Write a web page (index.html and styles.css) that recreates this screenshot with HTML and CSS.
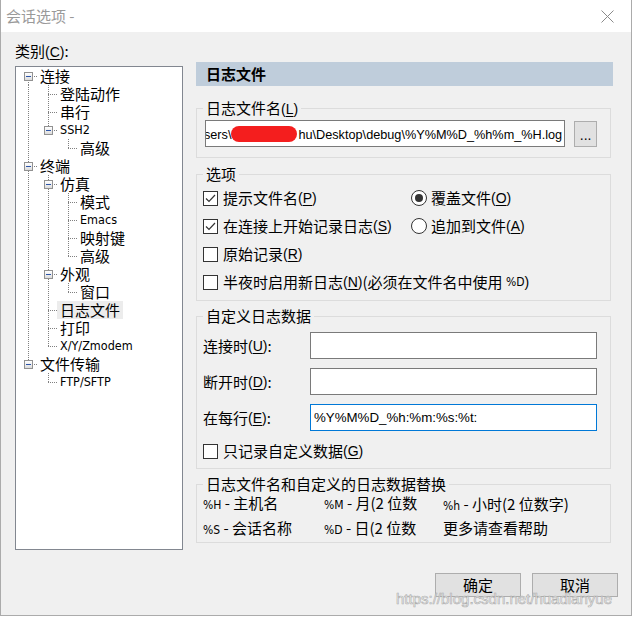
FILE: index.html
```html
<!DOCTYPE html>
<html lang="zh-CN">
<head>
<meta charset="utf-8">
<title>会话选项</title>
<link rel="stylesheet" href="styles.css">
</head>
<body>
<div class="window">
  <div class="titlebar">
    <span class="title">会话选项 -</span>
    <svg class="close" width="13" height="13" viewBox="0 0 13 13"><path d="M0.5 0.5 L12.5 12.5 M12.5 0.5 L0.5 12.5" stroke="#8a8a8a" stroke-width="1" fill="none"/></svg>
  </div>
  <div class="body">
    <div class="main">
      <div class="left">
        <div class="cat-label">类别<span class="k">(<u>C</u>)</span>:</div>
        <div class="tree">
          <div class="row"><span class="c root-first"><i class="exp"></i></span><span class="lbl">连接</span></div>
          <div class="row"><span class="c guide"></span><span class="c tee"></span><span class="lbl">登陆动作</span></div>
          <div class="row"><span class="c guide"></span><span class="c tee"></span><span class="lbl">串行</span></div>
          <div class="row"><span class="c guide"></span><span class="c elbow"><i class="exp"></i></span><span class="lbl lat">SSH2</span></div>
          <div class="row"><span class="c guide"></span><span class="c"></span><span class="c elbow"></span><span class="lbl">高级</span></div>
          <div class="row"><span class="c tee"><i class="exp"></i></span><span class="lbl">终端</span></div>
          <div class="row"><span class="c guide"></span><span class="c tee"><i class="exp"></i></span><span class="lbl">仿真</span></div>
          <div class="row"><span class="c guide"></span><span class="c guide"></span><span class="c tee"></span><span class="lbl">模式</span></div>
          <div class="row"><span class="c guide"></span><span class="c guide"></span><span class="c tee"></span><span class="lbl lat">Emacs</span></div>
          <div class="row"><span class="c guide"></span><span class="c guide"></span><span class="c tee"></span><span class="lbl">映射键</span></div>
          <div class="row"><span class="c guide"></span><span class="c guide"></span><span class="c elbow"></span><span class="lbl">高级</span></div>
          <div class="row"><span class="c guide"></span><span class="c tee"><i class="exp"></i></span><span class="lbl">外观</span></div>
          <div class="row"><span class="c guide"></span><span class="c guide"></span><span class="c elbow"></span><span class="lbl">窗口</span></div>
          <div class="row"><span class="c guide"></span><span class="c tee"></span><span class="lbl selected">日志文件</span></div>
          <div class="row"><span class="c guide"></span><span class="c tee"></span><span class="lbl">打印</span></div>
          <div class="row"><span class="c guide"></span><span class="c elbow"></span><span class="lbl lat">X/Y/Zmodem</span></div>
          <div class="row"><span class="c elbow"><i class="exp"></i></span><span class="lbl">文件传输</span></div>
          <div class="row"><span class="c"></span><span class="c elbow"></span><span class="lbl lat">FTP/SFTP</span></div>
        </div>
      </div>
      <div class="right">
        <div class="header">日志文件</div>

        <fieldset class="group g-file">
          <legend>日志文件名<span class="k">(<u>L</u>)</span></legend>
          <div class="file-row">
            <div class="input file-input"><span class="txt">sers\<span class="redact"></span>hu\Desktop\debug\%Y%M%D_%h%m_%H.log</span></div>
            <div class="btn-small">...</div>
          </div>
        </fieldset>

        <fieldset class="group g-opts">
          <legend>选项</legend>
          <div class="opts">
            <label class="opt"><span class="cb"><svg width="13" height="13" viewBox="0 0 13 13"><path d="M2 6.5 L5 9.5 L11 3" fill="none" stroke="#333" stroke-width="1.2"/></svg></span>提示文件名<span class="k">(<u>P</u>)</span></label>
            <label class="opt"><span class="rb on"></span>覆盖文件<span class="k">(<u>O</u>)</span></label>
            <label class="opt"><span class="cb"><svg width="13" height="13" viewBox="0 0 13 13"><path d="M2 6.5 L5 9.5 L11 3" fill="none" stroke="#333" stroke-width="1.2"/></svg></span>在连接上开始记录日志<span class="k">(<u>S</u>)</span></label>
            <label class="opt"><span class="rb"></span>追加到文件<span class="k">(<u>A</u>)</span></label>
            <label class="opt wide"><span class="cb"></span>原始记录<span class="k">(<u>R</u>)</span></label>
            <label class="opt wide"><span class="cb"></span>半夜时启用新日志<span class="k">(<u>N</u>)</span>(必须在文件名中使用&nbsp;<span class="code">%D</span><span class="k">)</span></label>
          </div>
        </fieldset>

        <fieldset class="group g-custom">
          <legend>自定义日志数据</legend>
          <div class="custom">
            <span class="flabel">连接时<span class="k">(<u>U</u>)</span>:</span>
            <div class="input"></div>
            <span class="flabel">断开时<span class="k">(<u>D</u>)</span>:</span>
            <div class="input"></div>
            <span class="flabel">在每行<span class="k">(<u>E</u>)</span>:</span>
            <div class="input focus"><span class="txt">%Y%M%D_%h:%m:%s:%t:</span></div>
          </div>
          <label class="opt only"><span class="cb"></span>只记录自定义数据<span class="k">(<u>G</u>)</span></label>
        </fieldset>

        <fieldset class="group g-subst">
          <legend>日志文件名和自定义的日志数据替换</legend>
          <div class="subst">
            <span><span class="code">%H</span> - 主机名</span>
            <span><span class="code">%M</span> - 月(2 位数</span>
            <span class="third"><span class="code">%h</span> - 小时(2 位数字)</span>
            <span><span class="code">%S</span> - 会话名称</span>
            <span><span class="code">%D</span> - 日(2 位数</span>
            <span>更多请查看帮助</span>
          </div>
        </fieldset>
      </div>
    </div>
    <div class="buttons">
      <button class="btn">确定</button>
      <button class="btn">取消</button>
    </div>
  </div>
  <div class="watermark">https://blog.csdn.net/huadianyue</div>
</div>
</body>
</html>
```
FILE: styles.css
```css
* { box-sizing: border-box; }
html, body { margin: 0; padding: 0; }
body {
  width: 633px;
  height: 617px;
  background: #fff;
  font-family: "Noto Sans CJK SC", "Liberation Sans", sans-serif;
  font-size: 15px;
  color: #000;
  overflow: hidden;
}
.window {
  position: relative;
  width: 632px;
  height: 616px;
  border: 1px solid #ababab;
  border-top: none;
  display: flex;
  flex-direction: column;
}
.titlebar {
  height: 32px;
  flex: none;
  background: #fff;
  display: flex;
  align-items: center;
  justify-content: space-between;
  padding: 0 17px 0 5px;
}
.title { color: #9a9a9a; font-size: 15px; line-height: 20px; }
.close { display: block; margin-top: 1px; }
.body {
  flex: 1;
  background: #f0f0f0;
  display: flex;
  flex-direction: column;
}
.main { display: flex; }
.left {
  width: 195px;
  flex: none;
  padding: 9px 13px 0 14px;
}
.cat-label { line-height: 20px; height: 20px; margin-bottom: 5px; }
.k { font-family: "Liberation Sans", sans-serif; font-size: 14px; }
.k u { text-underline-offset: 2px; }
.tree {
  width: 168px;
  height: 484px;
  background: #fff;
  border: 1px solid #828790;
  padding: 0 0 0 2px;
}
.row { display: flex; height: 18px; align-items: center; }
.c {
  width: 20px;
  height: 18px;
  flex: none;
  display: flex;
  align-items: flex-start;
}
.guide {
  background: repeating-linear-gradient(to bottom, #808080 0 1px, transparent 1px 2px) 10px 0 / 1px 18px no-repeat;
}
.tee {
  background:
    repeating-linear-gradient(to bottom, #808080 0 1px, transparent 1px 2px) 10px 0 / 1px 18px no-repeat,
    repeating-linear-gradient(to right, #808080 0 1px, transparent 1px 2px) 10px 9px / 10px 1px no-repeat;
}
.elbow {
  background:
    repeating-linear-gradient(to bottom, #808080 0 1px, transparent 1px 2px) 10px 0 / 1px 9px no-repeat,
    repeating-linear-gradient(to right, #808080 0 1px, transparent 1px 2px) 10px 9px / 10px 1px no-repeat;
}
.root-first {
  background:
    repeating-linear-gradient(to bottom, #808080 0 1px, transparent 1px 2px) 10px 9px / 1px 9px no-repeat,
    repeating-linear-gradient(to right, #808080 0 1px, transparent 1px 2px) 10px 9px / 10px 1px no-repeat;
}
.exp {
  display: block;
  width: 9px;
  height: 9px;
  margin: 5px 0 0 6px;
  border: 1px solid #919191;
  background:
    linear-gradient(#2d55a8, #2d55a8) 1px 3px / 5px 1px no-repeat,
    linear-gradient(#ffffff, #dcdcdc);
}
.lbl {
  margin-left: -1px;
  padding: 0 3px;
  line-height: 18px;
  height: 18px;
  white-space: nowrap;
}
.lbl.lat { font-family: "DejaVu Sans Condensed", "Liberation Sans", sans-serif; font-size: 12.5px; }
.lbl.selected { background: #ececec; }

.right {
  width: 417px;
  flex: none;
  padding-top: 30px;
}
.header {
  height: 24px;
  line-height: 24px;
  background: #bfcddb;
  font-weight: 700;
  padding-left: 10px;
}
.group {
  margin: 0 2px 0 0;
  border: 1px solid #dcdcdc;
  padding: 0 13px 0 6px;
  min-width: 0;
}
.group legend {
  padding: 0 3px;
  height: 20px;
  line-height: 20px;
  white-space: nowrap;
}
.g-file { margin-top: 12px; padding-bottom: 10px; }
.file-row { display: flex; align-items: flex-start; margin-top: 2px; }
.input {
  height: 27px;
  background: #fff;
  border: 1px solid #7a7a7a;
  display: flex;
  align-items: center;
  overflow: hidden;
  white-space: nowrap;
  font-family: "Liberation Sans", sans-serif;
  font-size: 13.3px;
}
.input.focus { border-color: #0078d7; }
.input .txt { padding: 0 3px; }
.file-input {
  width: 363px;
  margin-left: 2px;
  justify-content: flex-end;
  font-size: 12.7px;
}
.file-input .txt { flex: none; padding: 0 2px 0 0; }
.redact {
  display: inline-block;
  width: 66px;
  height: 16px;
  margin: 0 1px 0 0;
  vertical-align: -3px;
  background: #f41e1e;
  border-radius: 8px;
}
.btn-small {
  width: 23px;
  height: 26px;
  margin: 1px 0 0 9px;
  background: #e1e1e1;
  border: 1px solid #adadad;
  font-family: "Liberation Sans", sans-serif;
  font-size: 14px;
  line-height: 26px;
  text-align: center;
}
.g-opts { margin-top: 6px; padding-bottom: 4px; }
.opts {
  display: grid;
  grid-template-columns: 208px auto;
  grid-auto-rows: 28px;
}
.opt {
  display: flex;
  align-items: center;
  white-space: nowrap;
  line-height: 20px;
}
.opt.wide { grid-column: 1 / 3; }
.cb {
  width: 15px;
  height: 15px;
  flex: none;
  background: #fff;
  border: 1px solid #333;
  margin-right: 5px;
  display: flex;
  align-items: center;
  justify-content: center;
}
.cb svg { display: block; }
.rb {
  width: 16px;
  height: 16px;
  flex: none;
  border-radius: 50%;
  background: #fff;
  border: 1px solid #333;
  margin-right: 4px;
  display: flex;
  align-items: center;
  justify-content: center;
}
.rb.on::after {
  content: "";
  width: 8px;
  height: 8px;
  border-radius: 50%;
  background: #333;
}
.code { font-family: "DejaVu Sans Condensed", "Liberation Sans", sans-serif; font-size: 12px; }

.g-custom { margin-top: 5px; padding-bottom: 3px; }
.custom {
  display: grid;
  grid-template-columns: 107px 287px;
  grid-auto-rows: 27px;
  row-gap: 9px;
  margin-top: 6px;
}
.flabel { display: flex; align-items: center; line-height: 20px; white-space: nowrap; }
.only { height: 28px; margin-top: 6px; }

.g-subst { margin-top: 5px; padding-bottom: 5px; }
.subst {
  display: grid;
  grid-template-columns: 121px 119px auto;
  grid-auto-rows: 18px;
  row-gap: 7px;
  line-height: 18px;
  white-space: nowrap;
}
.subst .third { padding-top: 1px; }

.buttons {
  display: flex;
  justify-content: flex-end;
  gap: 11px;
  margin-top: 23px;
  padding-right: 13px;
}
.btn {
  width: 86px;
  height: 24px;
  margin: 0;
  padding: 0;
  background: #e1e1e1;
  border: 1px solid #adadad;
  font-family: "Noto Sans CJK SC", sans-serif;
  font-size: 15px;
  line-height: 22px;
  color: #000;
}
.watermark {
  position: absolute;
  left: 395px;
  top: 590px;
  font-family: "Liberation Sans", sans-serif;
  font-size: 15px;
  line-height: 18px;
  color: rgba(255, 255, 255, 0.9);
  -webkit-text-stroke: 0.7px rgba(150, 150, 150, 0.75);
  white-space: nowrap;
  pointer-events: none;
}
```
